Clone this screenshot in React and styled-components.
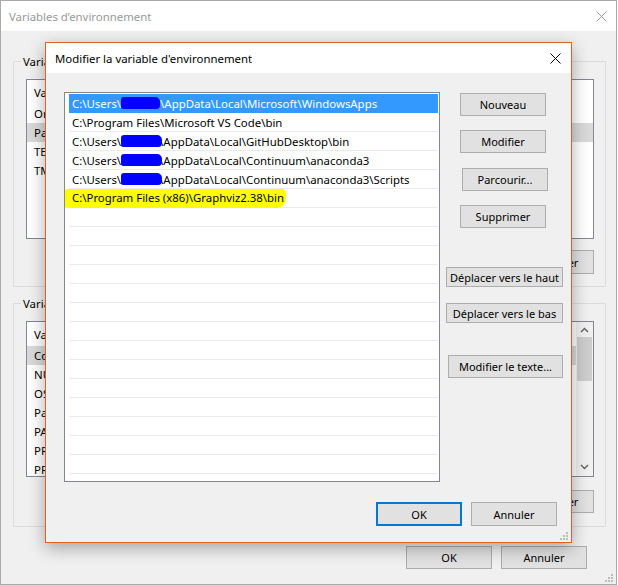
import React from 'react';
import styled, { createGlobalStyle } from 'styled-components';

const GlobalStyle = createGlobalStyle`
  html, body {
    margin: 0;
    padding: 0;
    background: #ffffff;
  }
  body {
    font-family: "Noto Sans", "Liberation Sans", sans-serif;
    font-size: 11.4px;
    color: #000;
  }
  * { box-sizing: border-box; }
`;

const Window = styled.div`
  position: relative;
  width: 617px;
  height: 585px;
  border: 1px solid #aaaaaa;
  background: #f0f0f0;
  display: flex;
  flex-direction: column;
`;

const TitleBar = styled.div`
  height: ${p => p.$h}px;
  flex: none;
  background: #ffffff;
  display: flex;
  align-items: center;
  justify-content: space-between;
  padding: 0 ${p => p.$right}px 0 ${p => p.$left}px;
`;

const TitleText = styled.span`
  color: ${p => (p.$inactive ? '#999999' : '#000000')};
  font-size: 11.4px;
`;

const WinBody = styled.div`
  flex: 1;
  display: flex;
  flex-direction: column;
  padding: 0 10px 0 12px;
`;

const Group = styled.fieldset`
  margin: ${p => p.$top}px 0 0 0;
  padding: ${p => p.$pt}px 11px ${p => p.$pb}px 12px;
  border: 1px solid #dcdcdc;
  min-width: 0;
`;

const Legend = styled.legend`
  margin-left: -5px;
  padding: 0 2px;
  font-size: 11.4px;
  line-height: 17px;
`;

const ListView = styled.div`
  position: relative;
  height: ${p => p.$h}px;
  border: 1px solid #828790;
  background: #ffffff;
  overflow: hidden;
`;

const HeaderRow = styled.div`
  height: 24px;
  display: flex;
  align-items: center;
  padding-left: 7px;
`;

const LvRow = styled.div`
  height: 19px;
  display: flex;
  align-items: center;
  padding-left: 7px;
  background: ${p => (p.$sel ? '#d9d9d9' : 'transparent')};
  white-space: nowrap;
`;

const ScrollBar = styled.div`
  position: absolute;
  top: 0;
  right: 0;
  bottom: 0;
  width: 17px;
  background: #f0f0f0;
  display: flex;
  flex-direction: column;
  align-items: center;
  justify-content: space-between;
  padding: 5px 0 6px;
`;

const Thumb = styled.div`
  width: 15px;
  height: 44px;
  margin-top: 4px;
  background: #cdcdcd;
`;

const Track = styled.div`
  flex: 1;
  display: flex;
  flex-direction: column;
  align-items: center;
`;

const ButtonRow = styled.div`
  display: flex;
  justify-content: flex-end;
  gap: ${p => p.$gap || 9}px;
  margin-top: ${p => p.$top}px;
  margin-right: ${p => p.$right || 0}px;
`;

const Btn = styled.button`
  width: ${p => p.$w || 86}px;
  height: ${p => p.$h || 23}px;
  margin: ${p => p.$mt || 0}px 0 0 ${p => p.$ml || 0}px;
  padding: 0;
  flex: none;
  background: #e1e1e1;
  border: ${p => (p.$default ? '2px solid #0078d7' : '1px solid #adadad')};
  font-family: inherit;
  font-size: 11px;
  color: #000;
  white-space: nowrap;
`;

const Grip = styled.svg`
  position: absolute;
  right: ${p => p.$r}px;
  bottom: ${p => p.$b}px;
`;

const Dialog = styled.div`
  position: absolute;
  left: 44px;
  top: 41px;
  width: 527px;
  height: 501px;
  border: 1px solid #d9622b;
  background: #f0f0f0;
  box-shadow: 0 5px 16px rgba(0, 0, 0, 0.32);
  display: flex;
  flex-direction: column;
`;

const DlgBody = styled.div`
  display: flex;
  padding: 19px 0 0 18px;
`;

const PathList = styled.div`
  width: 376px;
  height: 390px;
  border: 1px solid #828790;
  background: #ffffff;
  padding: 1px 1px 0 4px;
  overflow: hidden;
  font-size: 11.4px;
`;

const PathRow = styled.div`
  height: 19px;
  display: flex;
  align-items: center;
  padding-left: 3px;
  border-bottom: 1px solid ${p => (p.$sel ? '#3399ff' : '#ebebeb')};
  background: ${p => (p.$sel ? '#3399ff' : 'transparent')};
  color: ${p => (p.$sel ? '#ffffff' : '#000000')};
  white-space: nowrap;
`;

const Scribble = styled.span`
  display: inline-block;
  flex: none;
  width: ${p => p.$w}px;
  height: 12px;
  margin-right: ${p => p.$mr}px;
  background: #0000ff;
  border-radius: 3px 5px 4px 2px;
  position: relative;
  z-index: 1;
`;

const Highlight = styled.span`
  background: #ffff00;
  margin-left: -7px;
  padding: 1px 2px 3px 7px;
  border-radius: 2px 4px 9px 2px;
`;

const BtnColumn = styled.div`
  display: flex;
  flex-direction: column;
  align-items: flex-start;
  margin-left: 6px;
  padding-top: 1px;
`;

const DlgFooter = styled.div`
  display: flex;
  justify-content: flex-end;
  gap: 9px;
  margin-top: 20px;
  padding-right: 14px;
`;

const CloseX = ({ color }) => (
  <svg width="11" height="11" viewBox="0 0 11 11">
    <path d="M0.5 0.5 L10.5 10.5 M10.5 0.5 L0.5 10.5" stroke={color} strokeWidth="1" fill="none" />
  </svg>
);

const Chevron = ({ up }) => (
  <svg width="9" height="6" viewBox="0 0 9 6">
    <path d={up ? 'M1 5 L4.5 1.5 L8 5' : 'M1 1 L4.5 4.5 L8 1'} stroke="#606060" strokeWidth="1.4" fill="none" />
  </svg>
);

const GripDots = ({ r, b }) => (
  <Grip $r={r} $b={b} width="8" height="8" viewBox="0 0 8 8">
    {[[6, 0], [3, 3], [6, 3], [0, 6], [3, 6], [6, 6]].map(([x, y]) => (
      <rect key={`${x}-${y}`} x={x} y={y} width="2" height="2" fill="#bcbcbc" />
    ))}
  </Grip>
);

// only the left edge of the background lists shows, so the value column is left out
const userVars = [['OneDrive'], ['Path', true], ['TEMP'], ['TMP']];

const sysVars = [
  ['ComSpec', true],
  ['NUMBER_OF_PROCESSORS'],
  ['OS'],
  ['Path'],
  ['PATHEXT'],
  ['PROCESSOR_ARCHITECTURE'],
  ['PROCESSOR_IDENTIFIER'],
];

const paths = [
  { sel: true, scribble: 39, mr: 0, rest: '\\AppData\\Local\\Microsoft\\WindowsApps' },
  { text: 'C:\\Program Files\\Microsoft VS Code\\bin' },
  { scribble: 41, mr: -3, rest: '\\AppData\\Local\\GitHubDesktop\\bin' },
  { scribble: 41, mr: -3, rest: '\\AppData\\Local\\Continuum\\anaconda3' },
  { scribble: 41, mr: -3, rest: '\\AppData\\Local\\Continuum\\anaconda3\\Scripts' },
  { mark: 'C:\\Program Files (x86)\\Graphviz2.38\\bin' },
];

const App = () => {
  const empties = Array.from({ length: 15 }, (_, i) => i);

  return (
    <>
      <GlobalStyle />
      <Window>
        <TitleBar $h={30} $left={8} $right={9}>
          <TitleText $inactive>Variables d’environnement</TitleText>
          <CloseX color="#9a9a9a" />
        </TitleBar>
        <WinBody>
          <Group $top={22} $pt={9} $pb={12}>
            <Legend>Variables utilisateur</Legend>
            <ListView $h={160}>
              <HeaderRow>Variable</HeaderRow>
              {userVars.map(([name, sel]) => (
                <LvRow key={name} $sel={sel}>{name}</LvRow>
              ))}
            </ListView>
            <ButtonRow $top={11} $gap={8}>
              <Btn $h={24}>Nouveau...</Btn>
              <Btn $h={24}>Modifier...</Btn>
              <Btn $h={24}>Supprimer</Btn>
            </ButtonRow>
          </Group>

          <Group $top={8} $pt={9} $pb={13}>
            <Legend>Variables système</Legend>
            <ListView $h={156}>
              <HeaderRow>Variable</HeaderRow>
              {sysVars.map(([name, sel]) => (
                <LvRow key={name} $sel={sel}>{name}</LvRow>
              ))}
              <ScrollBar>
                <Chevron up />
                <Track>
                  <Thumb />
                </Track>
                <Chevron />
              </ScrollBar>
            </ListView>
            <ButtonRow $top={13} $gap={8}>
              <Btn>Nouveau...</Btn>
              <Btn>Modifier...</Btn>
              <Btn>Supprimer</Btn>
            </ButtonRow>
          </Group>

          <ButtonRow $top={19} $right={19}>
            <Btn>OK</Btn>
            <Btn>Annuler</Btn>
          </ButtonRow>
          <GripDots r={3} b={2} />
        </WinBody>

        <Dialog>
          <TitleBar $h={30} $left={9} $right={10}>
            <TitleText>Modifier la variable d'environnement</TitleText>
            <CloseX color="#000000" />
          </TitleBar>
          <DlgBody>
            <PathList>
              {paths.map((p, i) => (
                <PathRow key={i} $sel={p.sel}>
                  {p.text && p.text}
                  {p.scribble && (
                    <>
                      C:\Users\
                      <Scribble $w={p.scribble} $mr={p.mr} />
                      {p.rest}
                    </>
                  )}
                  {p.mark && <Highlight>{p.mark}</Highlight>}
                </PathRow>
              ))}
              {empties.map(i => (
                <PathRow key={`e${i}`} />
              ))}
            </PathList>
            <BtnColumn>
              <Btn $ml={14}>Nouveau</Btn>
              <Btn $ml={14} $mt={14}>Modifier</Btn>
              <Btn $ml={16} $mt={15}>Parcourir...</Btn>
              <Btn $ml={14} $mt={14}>Supprimer</Btn>
              <Btn $w={117} $h={20} $mt={39}>Déplacer vers le haut</Btn>
              <Btn $w={117} $h={20} $mt={16}>Déplacer vers le bas</Btn>
              <Btn $w={115} $ml={2} $mt={32}>Modifier le texte...</Btn>
            </BtnColumn>
          </DlgBody>
          <DlgFooter>
            <Btn $default $h={24}>OK</Btn>
            <Btn $h={24}>Annuler</Btn>
          </DlgFooter>
          <GripDots r={3} b={2} />
        </Dialog>
      </Window>
    </>
  );
};

export default App;
